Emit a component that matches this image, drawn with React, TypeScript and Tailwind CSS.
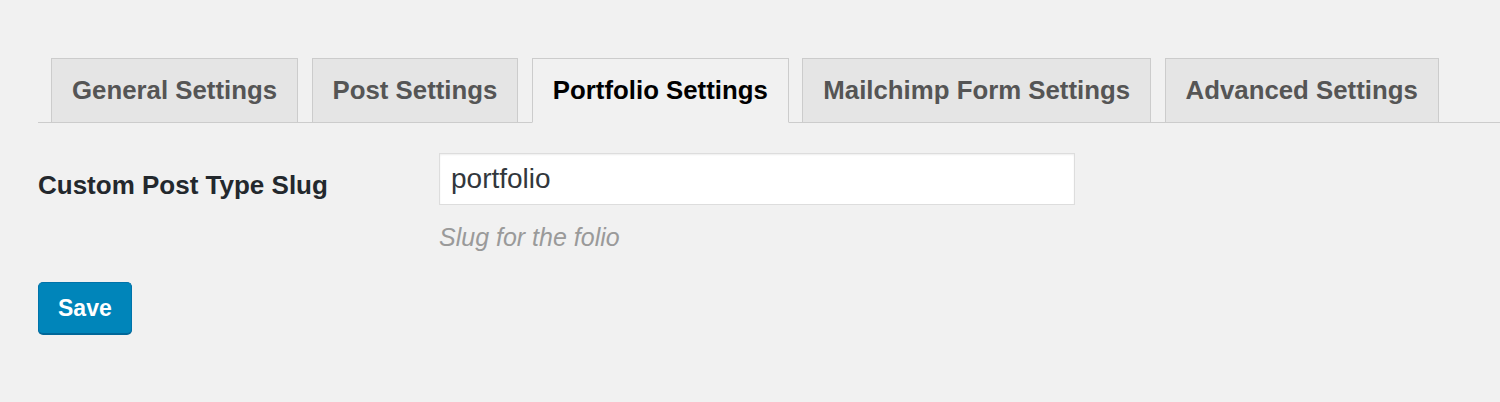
const tabs = [
  "General Settings",
  "Post Settings",
  "Portfolio Settings",
  "Mailchimp Form Settings",
  "Advanced Settings",
];

function Tab({ label, active }: { label: string; active?: boolean }) {
  if (active) {
    return (
      <div className="ml-[13.5px] -mb-px flex h-[65px] items-center border border-b-[#f1f1f1] border-[#ccc] bg-[#f1f1f1] px-[20px] pb-px text-[25.8px] font-bold text-black first:ml-[13px]">
        {label}
      </div>
    );
  }
  return (
    <div className="ml-[13.5px] flex h-[64px] items-center border border-b-0 border-[#ccc] bg-[#e5e5e5] px-[20px] text-[25.8px] font-bold text-[#555] first:ml-[13px]">
      {label}
    </div>
  );
}

export default function App() {
  return (
    <div className="min-h-[402px] bg-[#f1f1f1] pt-[58px] pl-[38px] font-['Liberation_Sans',Arial,sans-serif]">
      <div className="flex items-end border-b border-[#ccc]">
        {tabs.map((t) => (
          <Tab key={t} label={t} active={t === "Portfolio Settings"} />
        ))}
      </div>

      <div className="flex pt-[30px]">
        <label className="mt-[16px] w-[401px] shrink-0 text-[26px] leading-[32px] font-bold text-[#23282d]">
          Custom Post Type Slug
        </label>
        <div>
          <input
            type="text"
            defaultValue="portfolio"
            className="h-[52px] w-[636px] border border-[#ddd] bg-white px-[11px] text-[28px] text-[#32373c] shadow-[inset_0_1px_2px_rgba(0,0,0,0.07)] outline-none"
          />
          <p className="mt-[17px] text-[25px] leading-[30px] text-[#9a9a9a] italic">Slug for the folio</p>
        </div>
      </div>

      <button className="mt-[30px] h-[52px] rounded-[5px] border border-[#0073aa] border-b-[#006799] bg-[#0085ba] px-[19px] text-[23px] font-bold text-white shadow-[0_1px_0_#006799]">
        Save
      </button>
    </div>
  );
}
